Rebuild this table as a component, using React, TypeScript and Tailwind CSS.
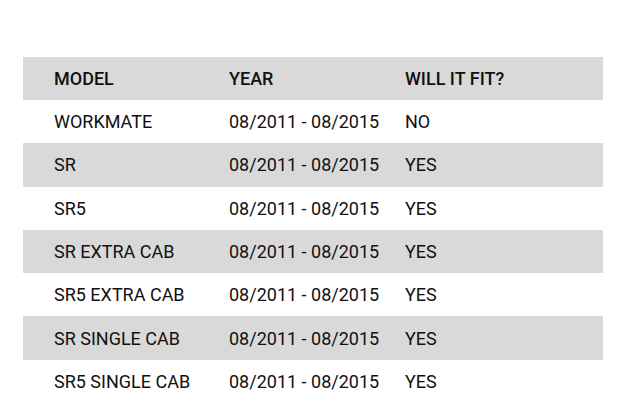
import React from "react";

const rows: [string, string, string][] = [
  ["WORKMATE", "08/2011 - 08/2015", "NO"],
  ["SR", "08/2011 - 08/2015", "YES"],
  ["SR5", "08/2011 - 08/2015", "YES"],
  ["SR EXTRA CAB", "08/2011 - 08/2015", "YES"],
  ["SR5 EXTRA CAB", "08/2011 - 08/2015", "YES"],
  ["SR SINGLE CAB", "08/2011 - 08/2015", "YES"],
  ["SR5 SINGLE CAB", "08/2011 - 08/2015", "YES"],
];

export default function App() {
  return (
    <div className="w-[642px] h-[419px] bg-white pt-[57px] pl-[23px] font-['Roboto',sans-serif] text-[18px] text-[#111]">
      <div className="w-[580px] flex flex-col">
        <div className="grid grid-cols-[175px_176px_1fr] pl-[31px] h-[43px] items-center bg-[#d9d9d9] font-medium">
          <div>MODEL</div>
          <div>YEAR</div>
          <div>WILL IT FIT?</div>
        </div>
        {rows.map((r, i) => (
          <div
            key={i}
            className={`grid grid-cols-[175px_176px_1fr] pl-[31px] h-[43.3px] items-center ${i % 2 === 1 ? "bg-[#d9d9d9]" : "bg-white"}`}
          >
            <div>{r[0]}</div>
            <div>{r[1]}</div>
            <div>{r[2]}</div>
          </div>
        ))}
      </div>
    </div>
  );
}
